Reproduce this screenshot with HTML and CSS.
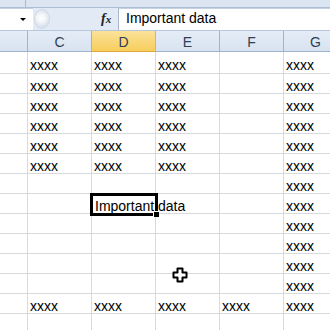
FILE: index.html
```html
<!DOCTYPE html>
<html>
<head>
<meta charset="utf-8">
<link rel="stylesheet" href="styles.css">
</head>
<body>
<div class="app">
  <div class="topbar"><div class="seg"></div><div class="seg2"></div></div>
  <div class="fbar">
    <div class="namebox"><span class="arrow"></span></div>
    <div class="grip"></div>
    <div class="fx">f<span class="fxx">x</span></div>
    <div class="finput">Important data</div>
  </div>
  <div class="sheet">
    <div class="hd"></div><div class="hd">C</div><div class="hd sel">D</div><div class="hd">E</div><div class="hd">F</div><div class="hd">G</div>

    <div class="c r1"></div><div class="c r1">xxxx</div><div class="c r1">xxxx</div><div class="c r1">xxxx</div><div class="c r1"></div><div class="c r1">xxxx</div>
    <div class="c"></div><div class="c">xxxx</div><div class="c">xxxx</div><div class="c">xxxx</div><div class="c"></div><div class="c">xxxx</div>
    <div class="c"></div><div class="c">xxxx</div><div class="c">xxxx</div><div class="c">xxxx</div><div class="c"></div><div class="c">xxxx</div>
    <div class="c"></div><div class="c">xxxx</div><div class="c">xxxx</div><div class="c">xxxx</div><div class="c"></div><div class="c">xxxx</div>
    <div class="c"></div><div class="c">xxxx</div><div class="c">xxxx</div><div class="c">xxxx</div><div class="c"></div><div class="c">xxxx</div>
    <div class="c"></div><div class="c">xxxx</div><div class="c">xxxx</div><div class="c">xxxx</div><div class="c"></div><div class="c">xxxx</div>

    <div class="c"></div><div class="c"></div><div class="c"></div><div class="c"></div><div class="c"></div><div class="c">xxxx</div>
    <div class="c"></div><div class="c"></div><div class="c active"><span class="val">Important data</span><div class="selbox"><span class="handle"></span></div></div><div class="c"></div><div class="c"></div><div class="c">xxxx</div>
    <div class="c"></div><div class="c"></div><div class="c"></div><div class="c"></div><div class="c"></div><div class="c">xxxx</div>
    <div class="c"></div><div class="c"></div><div class="c"></div><div class="c"></div><div class="c"></div><div class="c">xxxx</div>
    <div class="c"></div><div class="c"></div><div class="c"></div><div class="c"></div><div class="c"></div><div class="c">xxxx</div>
    <div class="c"></div><div class="c"></div><div class="c"></div><div class="c"></div><div class="c"></div><div class="c">xxxx</div>
    <div class="c"></div><div class="c">xxxx</div><div class="c">xxxx</div><div class="c">xxxx</div><div class="c">xxxx</div><div class="c">xxxx</div>
    <div class="c"></div><div class="c"></div><div class="c"></div><div class="c"></div><div class="c"></div><div class="c"></div>

    <svg class="cursor" width="16" height="16" viewBox="0 0 16 16">
      <path d="M5.5 1.5 H10.5 V5.5 H14.5 V10.5 H10.5 V14.5 H5.5 V10.5 H1.5 V5.5 H5.5 Z" fill="#fff" stroke="#000" stroke-width="2" stroke-linejoin="round"/>
    </svg>
  </div>
</div>
</body>
</html>
```

FILE: styles.css
```css
html, body {
  margin: 0;
  padding: 0;
  background: #fff;
}
.app {
  width: 330px;
  height: 330px;
  overflow: hidden;
  font-family: "Liberation Sans", Arial, sans-serif;
  color: #000;
}
.topbar {
  height: 7px;
  background: #dbe5f1;
  border-bottom: 1px solid #aebfd4;
  display: flex;
}
.topbar .seg {
  width: 25px;
  border-right: 1px solid #a8b9ce;
}
.topbar .seg2 {
  flex: 1;
}
.fbar {
  height: 22px;
  background: #e2eaf5;
  border-bottom: 1px solid #b7c6d9;
  display: flex;
  align-items: stretch;
  position: relative;
}
.namebox {
  width: 33px;
  background: #fff;
  position: relative;
  border-top: 1px solid #c5d2e2;
}
.arrow {
  position: absolute;
  right: 7px;
  top: 9px;
  width: 0;
  height: 0;
  border-left: 3px solid transparent;
  border-right: 3px solid transparent;
  border-top: 3px solid #000;
}
.grip {
  width: 14px;
  height: 18px;
  margin-top: 2px;
  margin-left: 2px;
  border-radius: 50%;
  background: radial-gradient(circle at 45% 45%, #ffffff 0, #f2f5f9 35%, #d7dfe9 70%, #c4cfdc 100%);
  box-shadow: 0 0 0 1px #cfd8e4;
}
.fx {
  margin-left: 52px;
  width: 17px;
  font-family: "Liberation Serif", "Times New Roman", serif;
  font-style: italic;
  font-weight: bold;
  font-size: 14px;
  line-height: 22px;
  color: #222;
}
.fxx {
  font-size: 11px;
}
.finput {
  flex: 1;
  background: #fff;
  border-left: 1px solid #a7b8cc;
  border-top: 1px solid #c5d2e2;
  font-size: 14px;
  line-height: 19px;
  padding-left: 7px;
  color: #000;
}
.sheet {
  position: relative;
  display: grid;
  grid-template-columns: 28px 64px 64px 64px 64px 64px;
  grid-template-rows: 21px 22px;
  grid-auto-rows: 20px;
}
.hd {
  box-sizing: border-box;
  background: linear-gradient(#e4ecf7, #d9e3f0);
  border-right: 1px solid #9eb4cc;
  border-bottom: 1px solid #9eb4cc;
  text-align: center;
  font-size: 14px;
  line-height: 19px;
  padding-top: 2px;
  color: #2d3f56;
}
.hd.sel {
  background: linear-gradient(#fbe29a, #f7cd5c);
  border-bottom-color: #e0a93c;
  border-right-color: #d9b36a;
}
.c {
  box-sizing: border-box;
  border-right: 1px solid #d6d9de;
  border-bottom: 1px solid #d6d9de;
  font-size: 14px;
  line-height: 19px;
  padding-top: 3px;
  padding-left: 2px;
  white-space: nowrap;
}
.c.r1 {
  padding-top: 4px;
}
.c.active {
  position: relative;
  overflow: visible;
  padding-left: 3px;
  z-index: 2;
}
.selbox {
  position: absolute;
  left: -2px;
  top: -1px;
  width: 68px;
  height: 23px;
  box-sizing: border-box;
  border: 3px solid #000;
}
.handle {
  position: absolute;
  right: -4px;
  bottom: -4px;
  width: 5px;
  height: 5px;
  background: #000;
  border-left: 1px solid #fff;
  border-top: 1px solid #fff;
}
.cursor {
  position: absolute;
  left: 172px;
  top: 236px;
}
```
